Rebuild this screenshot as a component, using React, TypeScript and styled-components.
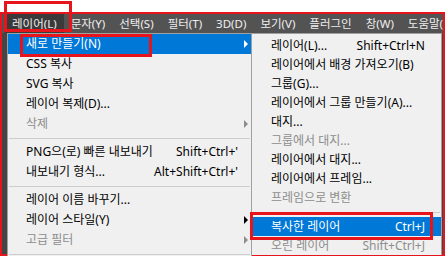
import React from 'react';
import styled, { createGlobalStyle } from 'styled-components';

const Global = createGlobalStyle`
  html, body { margin: 0; padding: 0; background: #ffffff; }
  body {
    width: 445px; height: 256px; overflow: hidden;
    font-family: "Noto Sans", "Noto Sans CJK KR", sans-serif;
  }
`;

const Screen = styled.div`
  position: relative;
  width: 445px;
  height: 256px;
  overflow: hidden;
  background: #ffffff;
  display: flex;
  flex-direction: column;
`;

const TopStrip = styled.div`
  height: 12px;
  flex: none;
`;

const Frame = styled.div`
  position: relative;
  flex: 1;
  border: 2px solid #e8141c;
  background: #454545;
  display: flex;
  flex-direction: column;
`;

const MenuBar = styled.div`
  height: 19px;
  flex: none;
  background: #535353;
  display: flex;
  align-items: stretch;
  padding-left: 3px;
  overflow: hidden;
  white-space: nowrap;
`;

const BarItem = styled.div<{ $active?: boolean }>`
  display: flex;
  align-items: center;
  padding: 0 7px;
  font-size: 11.5px;
  line-height: 1;
  color: #eeeeee;
  background: ${p => (p.$active ? '#3a3a3a' : 'transparent')};
`;

const Menu = styled.div<{ $left: number; $width: number; $pt: number }>`
  position: absolute;
  top: 19px;
  left: ${p => p.$left}px;
  width: ${p => p.$width}px;
  padding-top: ${p => p.$pt}px;
  background: #f0f0f0;
  border: 1px solid #a0a0a0;
  border-bottom: none;
  box-sizing: border-box;
  display: flex;
  flex-direction: column;
`;

const Row = styled.div<{ $h: number; $pl: number; $pr: number; $hl?: boolean; $dis?: boolean }>`
  height: ${p => p.$h}px;
  display: grid;
  grid-template-columns: 1fr auto 13px;
  align-items: center;
  padding-left: ${p => p.$pl}px;
  padding-right: ${p => p.$pr}px;
  font-size: 12px;
  line-height: 1;
  white-space: nowrap;
  background: ${p => (p.$hl ? '#0078d7' : 'transparent')};
  color: ${p => (p.$hl ? '#ffffff' : p.$dis ? '#8d8d8d' : '#000000')};
`;

const Label = styled.span``;

const Shortcut = styled.span`
  text-align: right;
`;

const Arrow = styled.span<{ $c: string }>`
  justify-self: end;
  margin-right: 3px;
  width: 0;
  height: 0;
  border-top: 4px solid transparent;
  border-bottom: 4px solid transparent;
  border-left: 4px solid ${p => p.$c};
`;

const Sep = styled.div<{ $h: number }>`
  height: ${p => p.$h}px;
  display: flex;
  align-items: center;
  padding: 0 1px;
  &::after {
    content: '';
    flex: 1;
    height: 1px;
    background: #cdcdcd;
  }
`;

const Mark = styled.div<{ $x: number; $y: number; $w: number; $h: number }>`
  position: absolute;
  left: ${p => p.$x}px;
  top: ${p => p.$y}px;
  width: ${p => p.$w}px;
  height: ${p => p.$h}px;
  border: 3px solid #e8141c;
  box-sizing: border-box;
  pointer-events: none;
`;

type Item =
  | { sep: true; h: number }
  | { sep?: false; label: string; sc?: string; sub?: boolean; hl?: boolean; dis?: boolean };

const barItems = ['레이어(L)', '문자(Y)', '선택(S)', '필터(T)', '3D(D)', '보기(V)', '플러그인', '창(W)', '도움말(H)'];

const leftItems: Item[] = [
  { label: '새로 만들기(N)', sub: true, hl: true },
  { label: 'CSS 복사' },
  { label: 'SVG 복사' },
  { label: '레이어 복제(D)...' },
  { label: '삭제', sub: true, dis: true },
  { sep: true, h: 8 },
  { label: 'PNG으(로) 빠른 내보내기', sc: "Shift+Ctrl+'" },
  { label: '내보내기 형식...', sc: "Alt+Shift+Ctrl+'" },
  { sep: true, h: 8 },
  { label: '레이어 이름 바꾸기...' },
  { label: '레이어 스타일(Y)', sub: true },
  { label: '고급 필터', sub: true, dis: true },
  { sep: true, h: 8 },
];

const subItems: Item[] = [
  { label: '레이어(L)...', sc: 'Shift+Ctrl+N' },
  { label: '레이어에서 배경 가져오기(B)' },
  { label: '그룹(G)...' },
  { label: '레이어에서 그룹 만들기(A)...' },
  { label: '대지...' },
  { label: '그룹에서 대지...', dis: true },
  { label: '레이어에서 대지...' },
  { label: '레이어에서 프레임...' },
  { label: '프레임으로 변환', dis: true },
  { sep: true, h: 10 },
  { label: '복사한 레이어', sc: 'Ctrl+J', hl: true },
  { label: '오린 레이어', sc: 'Shift+Ctrl+J', dis: true },
];

function renderItems(items: Item[], h: number, pl: number, pr: number) {
  return items.map((it, i) => {
    if (it.sep) return <Sep key={i} $h={it.h} />;
    const ac = it.hl ? '#ffffff' : it.dis ? '#8d8d8d' : '#000000';
    return (
      <Row key={i} $h={h} $pl={pl} $pr={pr} $hl={it.hl} $dis={it.dis}>
        <Label>{it.label}</Label>
        <Shortcut>{it.sc ?? ''}</Shortcut>
        {it.sub ? <Arrow $c={ac} /> : <span />}
      </Row>
    );
  });
}

export default function App() {
  return (
    <>
      <Global />
      <Screen>
        <TopStrip />
        <Frame>
          <MenuBar>
            {barItems.map((b, i) => (
              <BarItem key={b} $active={i === 0}>{b}</BarItem>
            ))}
          </MenuBar>
          <Menu $left={5} $width={245} $pt={0}>
            {renderItems(leftItems, 20, 18, 0)}
          </Menu>
          <Menu $left={249} $width={191} $pt={2}>
            {renderItems(subItems, 19, 19, 3)}
          </Menu>
        </Frame>
        <Mark $x={4} $y={1} $w={68} $h={31} />
        <Mark $x={20} $y={34} $w={132} $h={23} />
        <Mark $x={250} $y={212} $w={183} $h={28} />
      </Screen>
    </>
  );
}
